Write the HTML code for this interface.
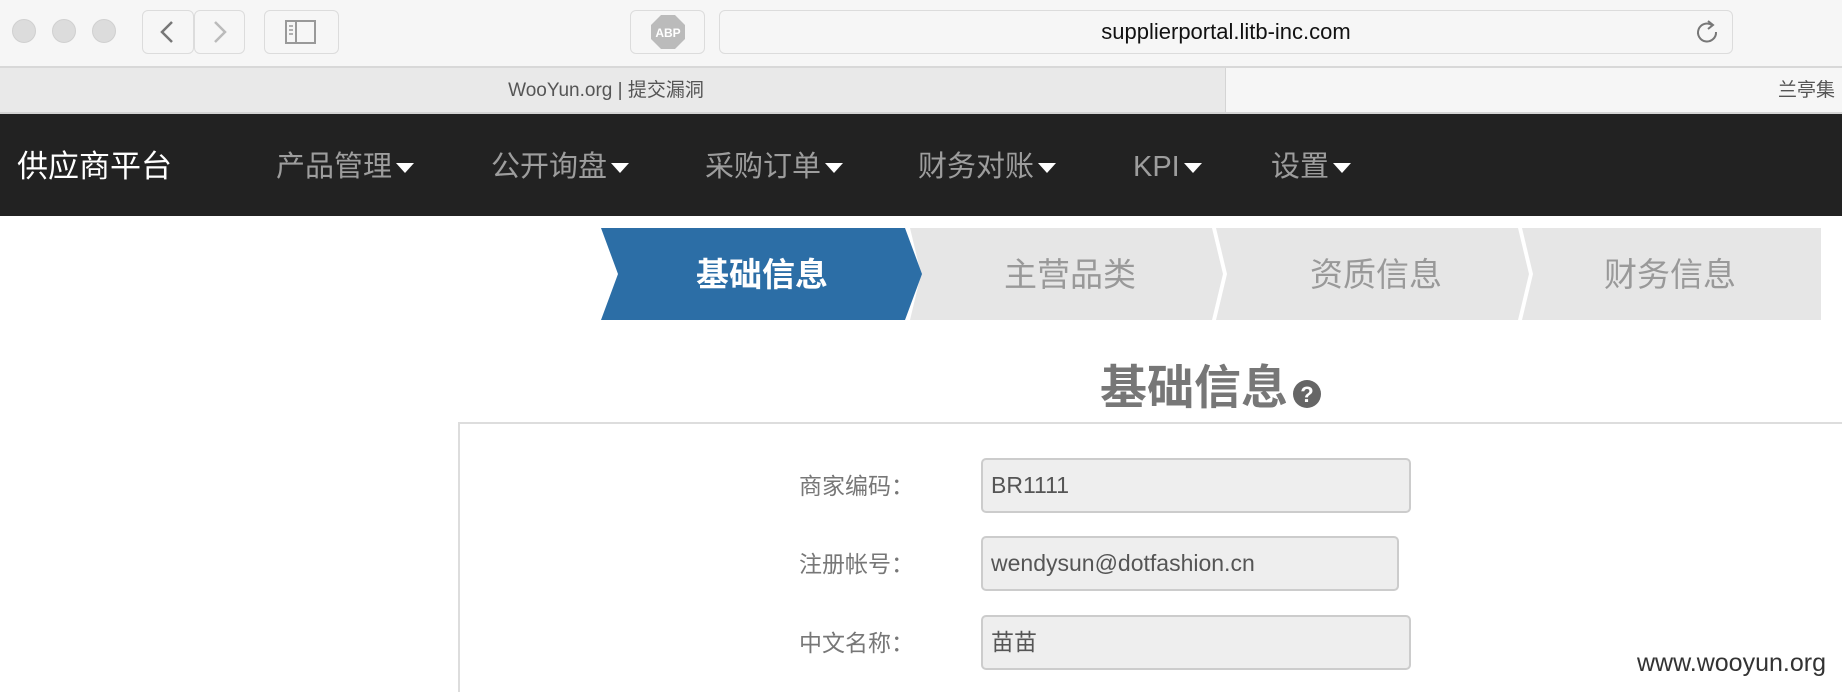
<!DOCTYPE html>
<html><head><meta charset="utf-8"><style>
*{margin:0;padding:0;box-sizing:border-box}
html,body{width:1842px;height:692px;overflow:hidden}
body{background:#fff;font-family:"Liberation Sans","Noto Sans CJK SC",sans-serif;position:relative}
.a{position:absolute}
.tb{left:0;top:0;width:1842px;height:68px;background:#f6f6f6;border-bottom:2px solid #d8d8d8}
.dot{width:24px;height:24px;border-radius:50%;background:#dcdcdc;border:1px solid #d0d0d0;top:19px}
.btn{border:1px solid #dcdcdc;border-radius:6px;background:#f6f6f6;top:10px;height:44px}
.tabs{left:0;top:68px;width:1842px;height:46px;background:#e9e9e9;border-bottom:2px solid #d4d4d4}
.nav{left:0;top:114px;width:1842px;height:102px;background:#222}
.nav span{position:absolute;top:145px;font-size:29px;color:#9d9d9d;line-height:44px}
.car{display:inline-block;width:0;height:0;border-left:9px solid transparent;border-right:9px solid transparent;border-top:10px solid #fff;vertical-align:middle;margin-left:4px}
.lbl{font-size:23px;color:#777;left:799px;line-height:30px}
.inp{left:981px;height:55px;width:430px;background:#eee;border:2px solid #ccc;border-radius:5px;font-size:23px;color:#555;padding-left:8px;line-height:50px}
</style></head><body>
<div class="a tb"></div>
<div class="a dot" style="left:12px"></div>
<div class="a dot" style="left:52px"></div>
<div class="a dot" style="left:92px"></div>
<div class="a btn" style="left:142px;width:52px"></div>
<div class="a btn" style="left:194px;width:51px"></div>
<svg class="a" style="left:142px;top:10px" width="103" height="44"><path d="M30 12 L20 22 L30 32" stroke="#777" stroke-width="2.5" fill="none"/><path d="M73 12 L83 22 L73 32" stroke="#bbb" stroke-width="2.5" fill="none"/></svg>
<div class="a btn" style="left:264px;width:75px"></div>
<svg class="a" style="left:285px;top:20px" width="32" height="24"><rect x="1" y="1" width="29" height="22" fill="none" stroke="#999" stroke-width="2"/><line x1="11" y1="1" x2="11" y2="23" stroke="#999" stroke-width="2"/><path d="M4 6h4M4 10h4M4 14h4" stroke="#999" stroke-width="1.5"/></svg>
<div class="a btn" style="left:630px;width:75px"></div>
<svg class="a" style="left:650px;top:14px" width="36" height="36"><polygon points="11,1 25,1 35,11 35,25 25,35 11,35 1,25 1,11" fill="#bbb"/><text x="18" y="23" font-size="12" font-weight="bold" fill="#fff" text-anchor="middle" font-family="Liberation Sans">ABP</text></svg>
<div class="a btn" style="left:719px;width:1014px;background:#f6f6f6"></div>
<div class="a" style="left:719px;width:1014px;top:10px;line-height:44px;text-align:center;font-size:22px;color:#111">supplierportal.litb-inc.com</div>
<svg class="a" style="left:1694px;top:19px" width="26" height="26"><path d="M18 6 A9 9 0 1 0 22 13" stroke="#777" stroke-width="2" fill="none"/><path d="M14 2 L19 6 L14 10" stroke="#777" stroke-width="2" fill="none"/></svg>
<div class="a tabs"></div>
<div class="a" style="left:1225px;top:68px;width:617px;height:46px;background:#f6f6f6;border-left:1px solid #d4d4d4;border-bottom:2px solid #d4d4d4"></div>
<div class="a" style="left:0;width:1212px;top:68px;line-height:46px;text-align:center;font-size:19px;color:#555">WooYun.org | 提交漏洞</div>
<div class="a" style="left:1778px;top:68px;line-height:46px;font-size:19px;color:#555;white-space:nowrap">兰亭集</div>
<div class="a nav"></div>
<div class="a" style="left:17px;top:145px;font-size:31px;color:#fff;line-height:44px">供应商平台</div>
<div class="nav">
<span style="left:276px">产品管理<i class="car"></i></span>
<span style="left:491px">公开询盘<i class="car"></i></span>
<span style="left:705px">采购订单<i class="car"></i></span>
<span style="left:918px">财务对账<i class="car"></i></span>
<span style="left:1133px">KPI<i class="car"></i></span>
<span style="left:1271px">设置<i class="car"></i></span>
</div>
<svg class="a" style="left:0;top:228px" width="1842" height="92">
<polygon points="1522,0 1821,0 1821,92 1522,92 1533,46" fill="#e6e6e6"/>
<polygon points="1216,0 1518,0 1529,46 1518,92 1216,92 1227,46" fill="#e6e6e6"/>
<polygon points="910,0 1212,0 1223,46 1212,92 910,92 921,46" fill="#e6e6e6"/>
<polygon points="601,0 905,0 922,46 905,92 601,92 618,46" fill="#2c6ea6"/>
<g font-family="Liberation Sans,Noto Sans CJK SC,sans-serif" font-size="33" text-anchor="middle">
<text x="762" y="58" fill="#fff" font-weight="bold">基础信息</text>
<text x="1070" y="58" fill="#999">主营品类</text>
<text x="1376" y="58" fill="#999">资质信息</text>
<text x="1670" y="58" fill="#999">财务信息</text>
</g></svg>
<div class="a" style="left:1100px;top:358px;font-size:47px;font-weight:bold;color:#777;line-height:60px">基础信息</div>
<svg class="a" style="left:1292px;top:379px" width="30" height="30"><circle cx="15" cy="15" r="14" fill="#666"/><text x="15" y="23" font-size="22" font-weight="bold" fill="#fff" text-anchor="middle" font-family="Liberation Sans">?</text></svg>
<div class="a" style="left:458px;top:422px;width:1400px;height:300px;border:2px solid #ddd;border-bottom:none"></div>
<div class="a lbl" style="top:471px">商家编码：</div>
<div class="a lbl" style="top:549px">注册帐号：</div>
<div class="a lbl" style="top:628px">中文名称：</div>
<div class="a inp" style="top:458px">BR1111</div>
<div class="a inp" style="top:536px;width:418px">wendysun@dotfashion.cn</div>
<div class="a inp" style="top:615px">苗苗</div>
<div class="a" style="left:1637px;top:648px;font-size:25px;color:#333;line-height:30px">www.wooyun.org</div>
</body></html>
